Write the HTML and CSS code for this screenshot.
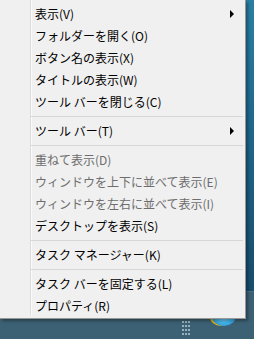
FILE: index.html
```html
<!DOCTYPE html>
<html lang="ja">
<head>
    <meta charset="UTF-8">
    <title>タスク バー メニュー</title>
    <link rel="stylesheet" href="styles.css">
</head>
<body>
<div class="screen">
    <div class="taskbar">
        <div class="gripper">
            <span></span><span></span><span></span>
            <span></span><span></span><span></span>
            <span></span><span></span><span></span>
            <span></span><span></span><span></span>
        </div>
        <div class="ieIcon"></div>
    </div>

    <div class="menu">
        <div class="item">表示(V)<span class="arrow"></span></div>
        <div class="item">フォルダーを開く(O)</div>
        <div class="item">ボタン名の表示(X)</div>
        <div class="item">タイトルの表示(W)</div>
        <div class="item">ツール バーを閉じる(C)</div>
        <div class="sep"></div>
        <div class="item">ツール バー(T)<span class="arrow"></span></div>
        <div class="sep"></div>
        <div class="item disabled">重ねて表示(D)</div>
        <div class="item disabled">ウィンドウを上下に並べて表示(E)</div>
        <div class="item disabled">ウィンドウを左右に並べて表示(I)</div>
        <div class="item">デスクトップを表示(S)</div>
        <div class="sep"></div>
        <div class="item">タスク マネージャー(K)</div>
        <div class="sep"></div>
        <div class="item">タスク バーを固定する(L)</div>
        <div class="item">プロパティ(R)</div>
    </div>
</div>
</body>
</html>
```

FILE: styles.css
```css
body {
    margin: 0;
    font-family: "Noto Sans CJK JP", "Noto Sans", sans-serif;
}

.screen {
    position: relative;
    width: 254px;
    height: 339px;
    overflow: hidden;
    background: linear-gradient(to bottom, #2a80a3 0px, #1f6a8e 120px, #184d6d 290px);
}

.taskbar {
    position: absolute;
    left: 0;
    bottom: 0;
    width: 254px;
    height: 47px;
    background: #3c6174;
    border-top: 1px solid #4a7083;
}

.gripper {
    position: absolute;
    left: 182px;
    top: 29px;
    display: grid;
    grid-template-columns: repeat(3, 2px);
    gap: 2px 1px;
}
.gripper span {
    width: 2px;
    height: 2px;
    background: #9ab0bc;
}

.ieIcon {
    position: absolute;
    left: 212px;
    top: 14px;
    width: 24px;
    height: 20px;
    border-radius: 50%;
    background: radial-gradient(circle at 50% 40%, #9fe4ff 0%, #3fb3ea 55%, #1d7fc4 100%);
    box-shadow: -3px 1px 0 -1px #e3b21c;
}

.menu {
    position: absolute;
    left: 0;
    top: 0;
    width: 245px;
    height: 315px;
    padding: 3px 0 0 0;
    background: linear-gradient(to right, #f0f0f0 30px, #dcdcdc 30px, #dcdcdc 31px, #fbfbfb 31px, #fbfbfb 32px, #f0f0f0 32px);
    background-repeat: no-repeat;
    background-size: 100% 315px;
    background-color: #f0f0f0;
    border-right: 1px solid #979797;
    border-bottom: 1px solid #979797;
    box-shadow: 2px 2px 3px rgba(0, 0, 0, 0.35);
    font-size: 12px;
    color: #000;
}

.item {
    display: flex;
    justify-content: space-between;
    align-items: center;
    height: 22px;
    line-height: 22px;
    padding-left: 35px;
    padding-right: 11px;
    white-space: nowrap;
}

.disabled {
    color: #6d6d6d;
}

.arrow {
    width: 0;
    height: 0;
    border-left: 4px solid #000;
    border-top: 4px solid transparent;
    border-bottom: 4px solid transparent;
}

.sep {
    margin: 3px 2px 3px 31px;
    border-top: 1px solid #d7d7d7;
    height: 0;
}
```
